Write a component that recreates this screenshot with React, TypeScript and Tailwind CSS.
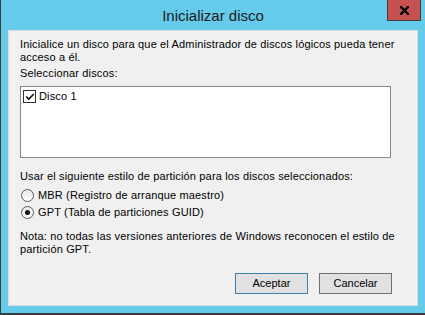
import { Check } from "lucide-react";

const Radio = ({ checked, label }: { checked?: boolean; label: string }) => (
  <label className="flex items-center h-[17px]">
    <span className="ml-[1px] w-[13px] h-[13px] rounded-full border border-[#5c5c5c] bg-gradient-to-b from-[#e8e8e8] to-white flex items-center justify-center">
      {checked && <span className="w-[5px] h-[5px] rounded-full bg-[#111]" />}
    </span>
    <span className="ml-[4px]">{label}</span>
  </label>
);

export default function App() {
  return (
    <div
      className="w-[425px] h-[315px] bg-[#66cbea] border-l border-b-2 border-[#3b3b3b] flex flex-col text-[11px] leading-[13px] text-black"
      style={{ fontFamily: '"Liberation Sans", Arial, sans-serif' }}
    >
      <header className="relative h-[30px] shrink-0 flex items-center justify-center">
        <h1 className="text-[15px] text-[#1a1a1a] leading-none pt-[1px]">
          Inicializar disco
        </h1>
        <button className="absolute left-[386px] top-0 w-[34px] h-[21px] bg-[#c75050] border-x border-b border-[#3f3f3f] flex items-center justify-center">
          <svg width="9" height="9" viewBox="0 0 9 9">
            <path
              d="M1 1 L8 8 M8 1 L1 8"
              stroke="#000"
              strokeWidth="2.4"
              strokeLinecap="square"
            />
          </svg>
        </button>
      </header>

      <main className="flex-1 ml-[7px] mr-[7px] mb-[7px] bg-[#f0f0f0] border border-[#dcdcdc] pl-[11px] pt-[7px] flex flex-col tracking-[0.15px]">
        <p>
          Inicialice un disco para que el Administrador de discos lógicos pueda tener
          <br />
          acceso a él.
        </p>
        <p className="mt-[3px]">Seleccionar discos:</p>

        <section className="mt-[6px] w-[371px] h-[72px] bg-white border border-[#828790] pt-[3px] pl-[2px]">
          <div className="flex items-center h-[13px]">
            <span className="w-[13px] h-[13px] border border-[#333] bg-white flex items-center justify-center">
              <Check size={10} strokeWidth={4} color="#111" />
            </span>
            <span className="ml-[3px]">Disco 1</span>
          </div>
        </section>

        <p className="mt-[12px]">
          Usar el siguiente estilo de partición para los discos seleccionados:
        </p>
        <div className="mt-[4px] flex flex-col">
          <Radio label="MBR (Registro de arranque maestro)" />
          <Radio checked label="GPT (Tabla de particiones GUID)" />
        </div>

        <p className="mt-[9px] leading-[12.5px]">
          Nota: no todas las versiones anteriores de Windows reconocen el estilo de
          <br />
          partición GPT.
        </p>

        <div className="mt-auto mb-[11px] mr-[25px] flex justify-end gap-[11px] tracking-normal">
          <button className="w-[73px] h-[21px] bg-[#e1e1e1] border border-[#3c7fb1]">
            Aceptar
          </button>
          <button className="w-[73px] h-[21px] bg-[#e1e1e1] border border-[#707070]">
            Cancelar
          </button>
        </div>
      </main>
    </div>
  );
}
